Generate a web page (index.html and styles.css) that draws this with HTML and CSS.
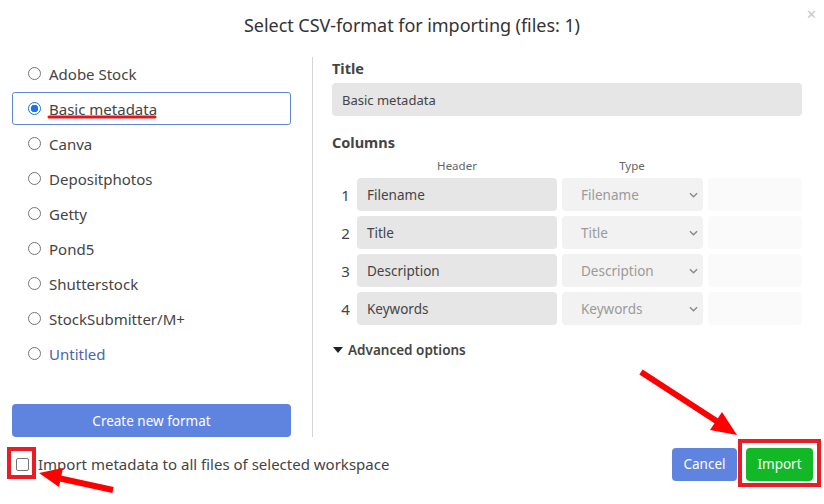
FILE: index.html
```html
<!DOCTYPE html>
<html>
<head>
<meta charset="utf-8">
<link rel="stylesheet" href="styles.css">
</head>
<body>
<div class="dialog">
  <header class="head">
    <h1 class="title">Select CSV-format for importing (files: 1)</h1>
    <span class="close">&#x2715;</span>
  </header>
  <div class="main">
    <aside class="left">
      <ul class="formats">
        <li class="fmt"><span class="radio"></span><span>Adobe Stock</span></li>
        <li class="fmt sel"><span class="radio on"></span><span>Basic metadata</span></li>
        <li class="fmt"><span class="radio"></span><span>Canva</span></li>
        <li class="fmt"><span class="radio"></span><span>Depositphotos</span></li>
        <li class="fmt"><span class="radio"></span><span>Getty</span></li>
        <li class="fmt"><span class="radio"></span><span>Pond5</span></li>
        <li class="fmt"><span class="radio"></span><span>Shutterstock</span></li>
        <li class="fmt"><span class="radio"></span><span>StockSubmitter/M+</span></li>
        <li class="fmt"><span class="radio"></span><span class="custom">Untitled</span></li>
      </ul>
      <button class="btn btn-blue create">Create new format</button>
    </aside>
    <section class="right">
      <div class="label">Title</div>
      <div class="field">Basic metadata</div>
      <div class="label cols">Columns</div>
      <div class="colhead"><span class="h1">Header</span><span class="h2">Type</span></div>
      <div class="row"><span class="num">1</span><div class="hdr">Filename</div><div class="sel-box"><span>Filename</span><svg class="chev" viewBox="0 0 10 6"><path d="M1 1l4 4 4-4" fill="none" stroke="#8a8a8a" stroke-width="1.6"/></svg></div><div class="extra"></div></div>
      <div class="row"><span class="num">2</span><div class="hdr">Title</div><div class="sel-box"><span>Title</span><svg class="chev" viewBox="0 0 10 6"><path d="M1 1l4 4 4-4" fill="none" stroke="#8a8a8a" stroke-width="1.6"/></svg></div><div class="extra"></div></div>
      <div class="row"><span class="num">3</span><div class="hdr">Description</div><div class="sel-box"><span>Description</span><svg class="chev" viewBox="0 0 10 6"><path d="M1 1l4 4 4-4" fill="none" stroke="#8a8a8a" stroke-width="1.6"/></svg></div><div class="extra"></div></div>
      <div class="row"><span class="num">4</span><div class="hdr">Keywords</div><div class="sel-box"><span>Keywords</span><svg class="chev" viewBox="0 0 10 6"><path d="M1 1l4 4 4-4" fill="none" stroke="#8a8a8a" stroke-width="1.6"/></svg></div><div class="extra"></div></div>
      <div class="adv"><span class="caret"></span>Advanced options</div>
    </section>
  </div>
  <footer class="foot">
    <label class="check"><span class="box"></span>Import metadata to all files of selected workspace</label>
    <div class="actions">
      <button class="btn btn-blue cancel">Cancel</button>
      <button class="btn btn-green import">Import</button>
    </div>
  </footer>
</div>
<svg class="annot" width="824" height="504" viewBox="0 0 824 504">
  <line x1="49" y1="117" x2="155" y2="117" stroke="#e8141c" stroke-width="3" stroke-linecap="round"/>
  <rect x="9" y="449" width="25" height="28" fill="none" stroke="#ea1c24" stroke-width="4"/>
  <rect x="740" y="441" width="79" height="44" fill="none" stroke="#ea1c24" stroke-width="4"/>
  <line x1="641" y1="372" x2="718" y2="422" stroke="#f00" stroke-width="6"/>
  <polygon points="737,435 710,430 722,412" fill="#f00"/>
  <line x1="113" y1="490" x2="58" y2="478" stroke="#f00" stroke-width="6"/>
  <polygon points="39,473 63,468 59,487" fill="#f00"/>
</svg>
</body>
</html>
```

FILE: styles.css
```css
* { box-sizing: border-box; }
html, body { margin: 0; padding: 0; }
body {
  width: 824px;
  height: 504px;
  background: #fff;
  font-family: "Noto Sans", "Open Sans", sans-serif;
  color: #444;
  position: relative;
  overflow: hidden;
}
.dialog { width: 824px; height: 504px; display: flex; flex-direction: column; }
.head { height: 57px; position: relative; display: flex; justify-content: center; }
.title { margin: 11px 0 0; font-size: 18px; font-weight: 400; color: #333; line-height: 28px; letter-spacing: -0.05px; }
.close { position: absolute; right: 7px; top: 5px; font-size: 13px; color: #c8c8c8; }
.main { display: flex; height: 380px; }
.left { width: 312px; padding-left: 12px; padding-right: 21px; display: flex; flex-direction: column; justify-content: space-between; }
.formats { list-style: none; margin: -1px 0 0; padding: 0; display: flex; flex-direction: column; }
.fmt { height: 33px; margin: 1px 0; display: flex; align-items: center; padding-left: 15px; font-size: 15px; color: #444; border: 1px solid transparent; border-radius: 3px; }
.fmt.sel { border-color: #5f84da; }
.radio { width: 13px; height: 13px; border: 1px solid #767676; border-radius: 50%; margin-right: 8px; flex: none; }
.radio.on { border: 1.5px solid #1a73e8; background: radial-gradient(circle, #1a73e8 0 3.5px, #fff 4px); }
.custom { color: #4c63ab; }
.btn { border: 0; border-radius: 4px; color: #fff; font-family: inherit; font-size: 13.5px; height: 33px; padding: 0; }
.btn-blue { background: #5f84e0; }
.btn-green { background: #12b826; }
.create { width: 279px; }
.right { flex: 1; border-left: 1px solid #d4d4d4; padding-left: 19px; padding-right: 22px; }
.label { font-weight: 700; font-size: 14.5px; color: #444; line-height: 20px; margin-top: 1px; }
.field { margin-top: 5px; height: 33px; background: #e6e6e6; border-radius: 4px; font-size: 13px; padding-left: 10px; display: flex; align-items: center; color: #444; }
.label.cols { margin-top: 16px; }
.colhead { display: flex; font-size: 11.5px; color: #666; height: 24px; align-items: center; margin-top: 2px; padding-bottom: 1px; }
.h1 { width: 250px; text-align: center; }
.h2 { width: 100px; text-align: center; margin-left: 0; }
.row { display: flex; height: 33px; margin-bottom: 5px; align-items: stretch; }
.num { width: 25px; display: flex; align-items: center; justify-content: center; font-size: 15px; color: #444; padding-left: 2px; }
.hdr { width: 200px; background: #e6e6e6; border-radius: 4px; margin-right: 5px; display: flex; align-items: center; padding-left: 10px; font-size: 13.5px; color: #444; }
.sel-box { width: 141px; background: #f2f2f2; border-radius: 4px; margin-right: 5px; display: flex; align-items: center; padding-left: 19px; padding-right: 4px; font-size: 13.5px; color: #9a9a9a; justify-content: space-between; }
.chev { width: 9px; height: 6px; margin-right: 1px; }
.extra { width: 94px; background: #fafafa; border-radius: 4px; }
.adv { margin-top: 16px; font-size: 13.5px; font-weight: 600; color: #444; display: flex; align-items: center; }
.caret { width: 0; height: 0; border-left: 5px solid transparent; border-right: 5px solid transparent; border-top: 6px solid #222; margin-right: 5px; margin-left: 1px; }
.foot { display: flex; justify-content: space-between; align-items: center; height: 54px; padding: 0 11px 0 16px; }
.check { display: flex; align-items: center; font-size: 15px; color: #444; }
.box { width: 13px; height: 13px; border: 1px solid #767676; border-radius: 2px; margin-right: 9px; }
.actions { display: flex; gap: 9px; }
.cancel { width: 65px; }
.import { width: 67px; }
.annot { position: absolute; left: 0; top: 0; pointer-events: none; }
```
